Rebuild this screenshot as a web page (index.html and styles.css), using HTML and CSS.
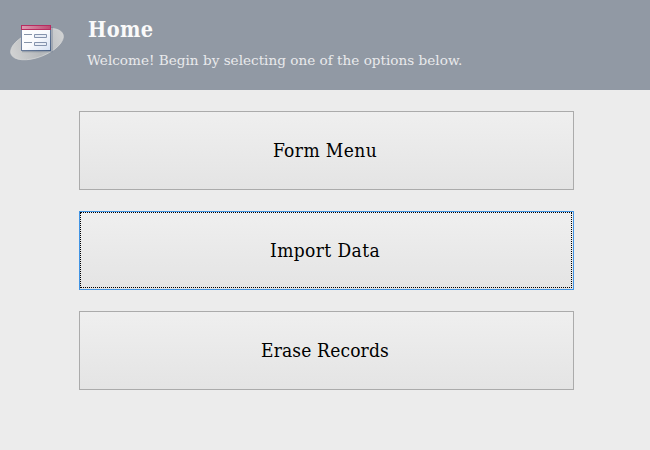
FILE: index.html
```html
<!DOCTYPE html>
<html lang="en">
<head>
<meta charset="utf-8">
<title>Home</title>
<link rel="stylesheet" href="styles.css">
</head>
<body>
<header class="header">
  <svg class="logo" width="60" height="44" viewBox="7 20 60 44">
    <defs>
      <linearGradient id="disc" x1="0" y1="0" x2="1" y2="0">
        <stop offset="0" stop-color="#d2d3d3"/>
        <stop offset=".5" stop-color="#b5b8bb"/>
        <stop offset="1" stop-color="#d0d2d3"/>
      </linearGradient>
      <linearGradient id="pane" x1="0" y1="0" x2="1" y2="1">
        <stop offset="0" stop-color="#fff"/>
        <stop offset=".55" stop-color="#f9fafd"/>
        <stop offset="1" stop-color="#d5e0f2"/>
      </linearGradient>
      <linearGradient id="bar" x1="0" y1="0" x2="1" y2="0">
        <stop offset="0" stop-color="#dc9bb1"/>
        <stop offset="1" stop-color="#bd4b73"/>
      </linearGradient>
      <linearGradient id="edge" x1="0" y1="0" x2="1" y2="1">
        <stop offset="0" stop-color="#8795ae"/>
        <stop offset="1" stop-color="#4b6285"/>
      </linearGradient>
    </defs>
    <ellipse cx="37" cy="44.1" rx="27.8" ry="13" transform="rotate(-21 37 44.1)" fill="url(#disc)" stroke="#d6d7d7" stroke-width=".7"/>
    <path d="M22 51.5h30V27" fill="none" stroke="#65758b" stroke-opacity=".45" stroke-width="1.5"/>
    <rect x="21.5" y="25.5" width="29" height="25" fill="url(#pane)" stroke="url(#edge)"/>
    <rect x="21.5" y="25.5" width="29" height="4" fill="url(#bar)" stroke="#b82b60"/>
    <path d="M24 34.5h8M24 42.5h8" stroke="#8593a8"/>
    <path d="M34.5 34.5h12v3h-12zM34.5 42.5h12v3h-12z" fill="#e9eef7" stroke="#8593ad"/>
  </svg>
  <div class="heading">
    <h1 class="title">Home</h1>
    <p class="subtitle">Welcome! Begin by selecting one of the options below.</p>
  </div>
</header>
<main class="menu">
  <button class="option" type="button"><span class="label">Form Menu</span></button>
  <button class="option option-focused" type="button"><span class="label">Import Data</span></button>
  <button class="option" type="button"><span class="label label-tight">Erase Records</span></button>
</main>
</body>
</html>
```
FILE: styles.css
```css
* { box-sizing: border-box; }
body {
  margin: 0;
  height: 450px;
  overflow: hidden;
  background: #ececec;
  font-family: "DejaVu Serif Condensed", "DejaVu Serif", serif;
  font-stretch: condensed;
}
.header {
  display: flex;
  height: 90px;
  padding-left: 7px;
  background: #9199a4;
}
.logo { margin-top: 20px; flex: none; }
.heading { margin-left: 20px; padding-top: 16px; white-space: nowrap; }
.title {
  margin: 0 0 0 1px;
  font-size: 21.5px;
  line-height: 28px;
  font-weight: bold;
  letter-spacing: .4px;
  color: #fafafa;
}
.subtitle {
  margin: 6px 0 0;
  font-family: "DejaVu Serif", serif;
  font-stretch: normal;
  font-size: 13.6px;
  line-height: 20px;
  color: #e9eaec;
}
.menu {
  display: flex;
  flex-direction: column;
  gap: 21px;
  padding: 21px 76px 0 79px;
}
.option {
  position: relative;
  height: 79px;
  padding: 0 3px 2px 0;
  border: 1px solid #ababab;
  border-radius: 0;
  background: linear-gradient(#efefef, #e4e4e4);
  color: #000;
  font-family: inherit;
  font-stretch: inherit;
  font-size: 19px;
  line-height: 26px;
}
.label { letter-spacing: .4px; }
.label-tight { letter-spacing: .15px; }
.option-focused { border-color: #4294e3; }
.option-focused::after {
  content: "";
  position: absolute;
  inset: 0 1px 1px 0;
  border: 1px dotted #000;
}
```
